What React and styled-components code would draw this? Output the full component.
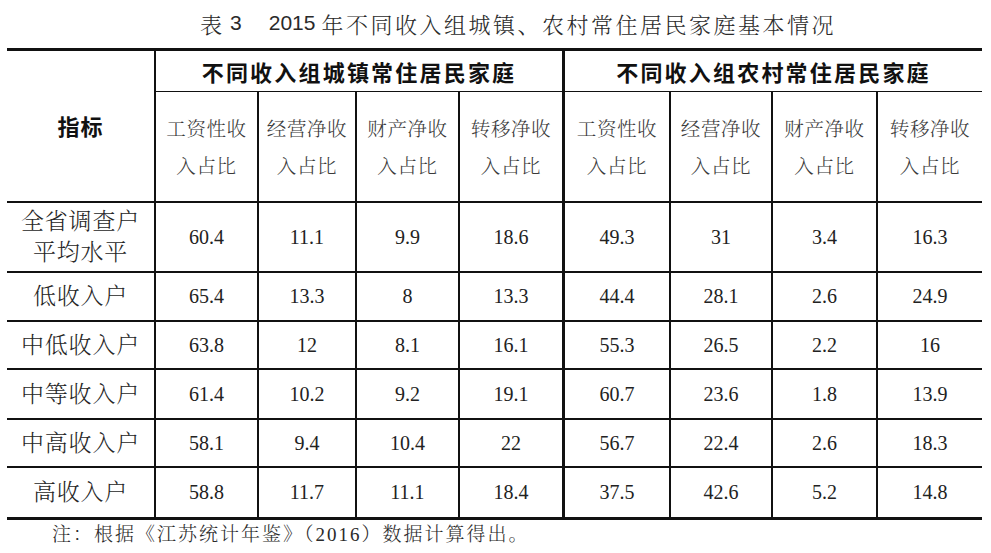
import React from "react";
import styled, { createGlobalStyle } from "styled-components";

const GlobalStyle = createGlobalStyle`
  html, body { margin: 0; padding: 0; background: #ffffff; }
  * { box-sizing: border-box; }
`;

const SERIF = `"Liberation Serif", "Noto Serif CJK SC", "Noto Sans CJK SC", serif`;
const SANS = `"Liberation Sans", "Noto Sans CJK SC", sans-serif`;

const Page = styled.div`
  width: 991px;
  height: 553px;
  overflow: hidden;
  background: #fff;
  color: #1a1a1a;
`;

const Title = styled.div`
  height: 48px;
  padding-left: 200px;
  display: flex;
  align-items: center;
  padding-bottom: 2px;
  font-family: ${SANS};
  font-size: 22px;
  color: #2a2a2a;
  white-space: nowrap;
`;

const TitleCjk = styled.span`
  font-family: "Noto Serif CJK SC", "Noto Sans CJK SC", sans-serif;
  font-weight: 300;
  letter-spacing: ${(p) => p.$ls || "2.5px"};
  margin-left: ${(p) => p.$ml || "0"};
`;

const TitleNum = styled.span`
  font-family: "Liberation Sans", sans-serif;
  font-size: 21px;
  margin-left: ${(p) => p.$ml || "0"};
`;

const Grid = styled.div`
  margin-left: 7px;
  width: 975px;
  display: grid;
  grid-template-columns: 149px 103px 98px 103px 105px 106px 102px 105px 104px;
  grid-template-rows: 41px 111px 70px 49px 48px 50px 48px 49px;
  border-top: 3px solid #111;
  border-bottom: 3px solid #111;
`;

const Cell = styled.div`
  display: flex;
  align-items: center;
  justify-content: center;
  text-align: center;
  border-right: ${(p) => p.$r || 0}px solid #111;
  border-bottom: ${(p) => p.$b || 0}px solid #111;
  grid-column: ${(p) => p.$col || "auto"};
  grid-row: ${(p) => p.$row || "auto"};
`;

const IndexHead = styled(Cell)`
  font-family: "Noto Sans CJK SC", sans-serif;
  font-weight: 700;
  font-size: 22px;
  letter-spacing: 1px;
  color: #111;
  padding-bottom: 2px;
`;

const GroupHead = styled(Cell)`
  font-family: "Noto Sans CJK SC", sans-serif;
  font-weight: 700;
  font-size: 22px;
  letter-spacing: 2.2px;
  color: #111;
  padding-left: 0;
`;

const SubHead = styled(Cell)`
  font-family: ${SERIF};
  font-weight: 300;
  font-size: 19.5px;
  line-height: 37px;
  letter-spacing: 0.6px;
  color: #3a3a3a;
  padding-top: 2px;
`;

const RowLabel = styled(Cell)`
  font-family: ${SERIF};
  font-weight: 300;
  font-size: 23px;
  line-height: 31px;
  letter-spacing: 0.8px;
  color: #262626;
  padding-left: 0;
`;

const DataCell = styled(Cell)`
  font-family: ${SERIF};
  font-size: 20px;
  color: #222;
`;

const Note = styled.div`
  padding-left: 52px;
  padding-top: 2px;
  font-family: ${SERIF};
  font-weight: 300;
  font-size: 19px;
  letter-spacing: 2px;
  line-height: 26px;
  color: #2a2a2a;
  white-space: nowrap;
`;

const subHeads = ["工资性收\n入占比", "经营净收\n入占比", "财产净收\n入占比", "转移净收\n入占比"];

const rows = [
  ["全省调查户\n平均水平", "60.4", "11.1", "9.9", "18.6", "49.3", "31", "3.4", "16.3"],
  ["低收入户", "65.4", "13.3", "8", "13.3", "44.4", "28.1", "2.6", "24.9"],
  ["中低收入户", "63.8", "12", "8.1", "16.1", "55.3", "26.5", "2.2", "16"],
  ["中等收入户", "61.4", "10.2", "9.2", "19.1", "60.7", "23.6", "1.8", "13.9"],
  ["中高收入户", "58.1", "9.4", "10.4", "22", "56.7", "22.4", "2.6", "18.3"],
  ["高收入户", "58.8", "11.7", "11.1", "18.4", "37.5", "42.6", "5.2", "14.8"],
];

const colRight = (i) => (i === 3 ? 3 : i === 7 ? 0 : 2);

const Lines = ({ text }) =>
  text.split("\n").map((t, i) => (
    <React.Fragment key={i}>
      {i > 0 && <br />}
      {t}
    </React.Fragment>
  ));

export default function App() {
  return (
    <Page>
      <GlobalStyle />
      <Title>
        <TitleCjk $ls="0">表</TitleCjk>
        <TitleNum $ml="8px">3</TitleNum>
        <TitleNum $ml="27px">2015</TitleNum>
        <TitleCjk $ml="6px">年不同收入组城镇、农村常住居民家庭基本情况</TitleCjk>
      </Title>
      <Grid>
        <IndexHead $r={2} $b={2} $col="1" $row="1 / span 2">
          指标
        </IndexHead>
        <GroupHead $r={3} $b={1} $col="2 / span 4" $row="1">
          不同收入组城镇常住居民家庭
        </GroupHead>
        <GroupHead $r={0} $b={1} $col="6 / span 4" $row="1">
          不同收入组农村常住居民家庭
        </GroupHead>
        {[...subHeads, ...subHeads].map((s, i) => (
          <SubHead key={i} $r={colRight(i)} $b={2} $row="2">
            <div>
              <Lines text={s} />
            </div>
          </SubHead>
        ))}
        {rows.map((r, ri) => {
          const last = ri === rows.length - 1;
          return (
            <React.Fragment key={ri}>
              <RowLabel $r={2} $b={last ? 0 : 2}>
                <div>
                  <Lines text={r[0]} />
                </div>
              </RowLabel>
              {r.slice(1).map((v, ci) => (
                <DataCell key={ci} $r={colRight(ci)} $b={last ? 0 : 2}>
                  {v}
                </DataCell>
              ))}
            </React.Fragment>
          );
        })}
      </Grid>
      <Note>注：根据《江苏统计年鉴》（2016）数据计算得出。</Note>
    </Page>
  );
}
